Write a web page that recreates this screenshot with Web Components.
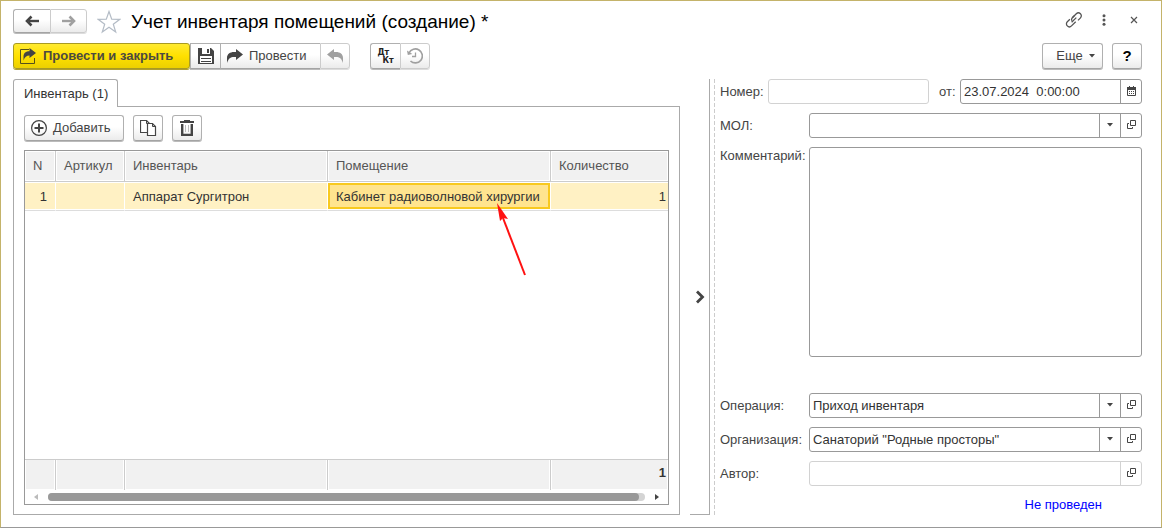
<!DOCTYPE html>
<html lang="ru">
<head>
<meta charset="utf-8">
<title>Учет инвентаря помещений (создание) *</title>
<style>
  html, body { margin: 0; }
  body {
    font: 13px/16px "Liberation Sans", Arial, sans-serif;
    color: #444;
    background: #fff;
  }
</style>
</head>
<body>
<app-window></app-window>

<script>
const ICONS = {
  back: [14, 12, '<path d="M14 6H4" stroke="currentColor" stroke-width="2.400" fill="none"/><path d="M6.500 1.500 2 6l4.500 4.500" stroke="currentColor" stroke-width="2.600" fill="none"/>'],
  forward: [14, 12, '<path d="M0 6h10" stroke="currentColor" stroke-width="2.400" fill="none"/><path d="M7.500 1.500 12 6l-4.500 4.500" stroke="currentColor" stroke-width="2.600" fill="none"/>'],
  star: [24, 24, '<path d="M12 1.500l2.700 7.700 8.100.1-6.500 4.900 2.400 7.800L12 17.300 5.300 22l2.400-7.800L1.200 9.300l8.100-.1z" fill="none" stroke="#b4bcc6" stroke-width="1.200"/>'],
  link: [18, 18, '<g fill="none" stroke="#555" stroke-width="1.300"><path d="M7.300 6.800l4-4a2.900 2.900 0 0 1 4.200 4.100L13 9.400"/><path d="M9.300 4.800L7.300 6.800c-.9 1-.9 2-.5 2.900"/><path d="M10.700 10.700l-4.200 4.200a2.900 2.900 0 0 1-4.200-4.200L4.900 8.200"/><path d="M6.600 11.300l4.700-4.700"/></g>'],
  dots: [4, 12, '<g fill="#555"><circle cx="2" cy="1.700" r="1.500"/><circle cx="2" cy="6" r="1.500"/><circle cx="2" cy="10.300" r="1.500"/></g>'],
  close: [8, 8, '<path d="M1 1l6 6M7 1L1 7" stroke="#555" stroke-width="1.200"/>'],
  post: [17, 16, '<path d="M9 1.500H.500v14h14V10" fill="none" stroke="#55501c"/><path d="M3.500 12.500V8.500C3.500 5 6 3.200 9.500 3.200V0L16 5l-6.500 5V7.600C6.500 7.600 4.700 9 3.500 12.500z" fill="#444"/>'],
  save: [16, 16, '<path d="M0 0h13l3 3v13H0z" fill="#444"/><path d="M4 0h8v6H4z" fill="#fff"/><path d="M9 1h2v4H9z" fill="#444"/><path d="M2 8h12v7H2z" fill="#fff"/><path d="M3 10.500h10M3 13.500h10" stroke="#444"/>'],
  redo: [16, 15, '<path d="M0 14V9c0-4 3-6 7-6h2V0l7 5.500L9 11V8H7C3.500 8 1.500 9.500 0 14z" fill="currentColor"/>'],
  undo: [16, 15, '<path d="M16 14V9c0-4-3-6-7-6H7V0L0 5.500 7 11V8h2c3.500 0 5.500 1.500 7 6z" fill="currentColor"/>'],
  history: [16, 16, '<path d="M2 5A7 7 0 1 1 3.500 13" fill="none" stroke="currentColor" stroke-width="1.700"/><path d="M0 2.500l.8 4.500 4.500-1z" fill="currentColor"/><path d="M8.500 4.500v4H5" fill="none" stroke="currentColor" stroke-width="1.300"/>'],
  add: [16, 16, '<circle cx="8" cy="8" r="7.400" fill="none" stroke="#444" stroke-width="1.200"/><path d="M8 3.500v9M3.500 8h9" stroke="#444" stroke-width="2"/>'],
  copy: [17, 16, '<path d="M6 12.500H.5V.5h6l3 3v9z" fill="#fff" stroke="#444" stroke-width="1.200"/><path d="M6.500.5v3h3" fill="none" stroke="#444"/><path d="M7.500 3.500h5l3 3v9h-8z" fill="#fff" stroke="#444" stroke-width="1.200"/><path d="M12.500 3.500v3h3" fill="none" stroke="#444"/>'],
  trash: [14, 16, '<path d="M0 1h4V0h6v1h4v2H0z" fill="#444"/><path d="M2.200 4v10.900h9.600V4" fill="none" stroke="#444" stroke-width="2.400"/><path d="M5.500 5v7M8.500 5v7" stroke="#bbb"/>'],
  caret: [6, 4, '<path d="M0 0h6L3 3.500z" fill="#444"/>'],
  open: [9, 9, '<path d="M3.500.5h5v5h-5z" fill="none" stroke="#444"/><path d="M2 3.500H.5v5h5V7" fill="none" stroke="#444"/>'],
  calendar: [9, 10, '<path d="M.5 1.500h8v8h-8z" fill="#fff" stroke="#444"/><path d="M0 1h9v3H0zM2 0h1v2H2zM6 0h1v2H6z" fill="#444"/><path d="M2 5.500h5M2 7.500h5" stroke="#444" stroke-dasharray="1 1"/>'],
  chevron: [10, 14, '<path d="M2 1.500L7.500 7 2 12.500" fill="none" stroke="#444" stroke-width="2.800"/>'],
  left: [4, 6, '<path d="M4 0v6L0 3z" fill="#bbb"/>'],
  right: [4, 6, '<path d="M0 0v6l4-3z" fill="#444"/>'],
  pointer: [32, 74, '<path d="M29 72L7 15" stroke="#f11" stroke-width="2" fill="none"/><path d="M1 0l11 16-5-1-3 3z" fill="#f11"/>']
};

function define(name, html, setup) {
  const template = document.createElement('template');
  template.innerHTML = html;
  customElements.define(name, class extends HTMLElement {
    connectedCallback() {
      if (this.shadowRoot) return;
      const root = this.attachShadow({ mode: 'open' });
      root.append(template.content.cloneNode(true));
      if (setup) setup(this, root);
    }
  });
}

define('ui-icon', '<style>:host{display:inline-flex;flex:none}svg{display:block}</style>', (host, root) => {
  const [w, h, body] = ICONS[host.getAttribute('name')];
  root.innerHTML += `<svg width="${w}" height="${h}" viewBox="0 0 ${w} ${h}" aria-hidden="true">${body}</svg>`;
});

define('ui-button', `
<style>
  :host { display: inline-flex; height: 27px; }
  button {
    box-sizing: border-box; min-width: 30px; height: calc(100% - 1px); width: 100%; padding: 0 4px;
    display: flex; align-items: center; justify-content: center; gap: 6px;
    font: inherit; color: #444; white-space: nowrap;
    border: 1px solid #b0b0b0; border-bottom-color: #a4a4a4; border-radius: 3px;
    box-shadow: 0 1px #bbb;
    background: linear-gradient(#fff 45%, #ebebeb);
  }
  :host([tone=nav]) { height: 25px; }
  :host([tone=nav]) button { min-width: 37px; }
  :host([wide]) button { justify-content: flex-start; padding: 0 6px; }
  :host([tone=primary]) button {
    font-weight: bold; color: #4c4a40; border-color: #a89a22; box-shadow: 0 1px #b0a030;
    background: linear-gradient(#ffea30, #ffe000 50%, #ecd000);
  }
  :host([tone=flat]) button { border: 0; background: none; box-shadow: none; }
  :host([off]) button { color: #a0a0a0; border-color: #ccc; box-shadow: 0 1px #ddd; }
  :host([join~=right]) button { border-top-right-radius: 0; border-bottom-right-radius: 0; border-right: 0; }
  :host([join~=left]) button { border-top-left-radius: 0; border-bottom-left-radius: 0; }
</style>
<button type="button"><slot></slot></button>`, (host, root) => {
  const b = root.querySelector('button');
  b.disabled = host.hasAttribute('off');
  if (host.hasAttribute('hint')) { b.setAttribute('aria-label', host.getAttribute('hint')); b.title = host.getAttribute('hint'); }
});

define('ui-field', `
<style>
  :host { display: flex; align-items: flex-start; }
  label { flex: none; width: var(--label-width, 89px); line-height: 25px; white-space: nowrap; }
  .box {
    flex: 1; min-width: 0; box-sizing: border-box; height: 25px; display: grid;
    grid-template-columns: minmax(0, 1fr) auto auto;
    border: 1px solid #999; border-radius: 3px; background: #fff;
  }
  :host([muted]) .box { border-color: #d2d2d2; }
  input, select, textarea {
    grid-area: 1 / 1; box-sizing: border-box; width: 100%; margin: 0; padding: 0 3px; border: 0;
    font: inherit; color: #333; background: none; appearance: none; outline: 0; resize: none; border-radius: 0;
  }
  select { grid-column: 1 / 3; }
  .caret, button {
    box-sizing: border-box; width: 21px; display: flex; align-items: center; justify-content: center;
    border: 0; border-left: 1px solid #999; background: none; padding: 0 0 2px;
  }
  :host([muted]) button { border-color: #d2d2d2; }
  .caret { grid-area: 1 / 2; pointer-events: none; }
  button { grid-area: 1 / 3; }
  :host([kind=memo]) { align-items: stretch; }
  :host([kind=memo]) label { line-height: 18px; }
  :host([kind=memo]) .box { height: auto; min-height: 120px; }
</style>
<label for="control"></label><div class="box"></div>`, (host, root) => {
  const kind = host.getAttribute('kind');
  const value = host.getAttribute('value') || '';
  root.querySelector('label').textContent = host.getAttribute('label');
  const control = document.createElement(kind === 'select' ? 'select' : kind === 'memo' ? 'textarea' : 'input');
  control.id = 'control';
  if (kind === 'select') control.add(new Option(value, value, true, true));
  else control.value = value;
  if (host.hasAttribute('muted')) control.readOnly = true;
  const box = root.querySelector('.box');
  box.append(control);
  if (kind === 'select') box.insertAdjacentHTML('beforeend', '<span class="caret"><ui-icon name="caret"></ui-icon></span>');
  const action = host.getAttribute('action');
  if (action) box.insertAdjacentHTML('beforeend',
    `<button type="button" aria-label="${action === 'open' ? 'Открыть' : 'Выбрать дату'}"><ui-icon name="${action}"></ui-icon></button>`);
});

define('window-header', `
<style>
  :host { display: flex; align-items: center; height: 25px; }
  .nav { display: flex; }
  ui-icon[name=star] { margin: 0 10px; }
  h1 { flex: 1; min-width: 0; margin: 0; font-size: 19px; line-height: 24px; font-weight: normal; color: #000; white-space: nowrap; }
  .tools { display: flex; margin-right: -7px; padding-bottom: 2px; }
</style>
<div class="nav">
  <ui-button tone="nav" join="right" hint="Назад"><ui-icon name="back"></ui-icon></ui-button>
  <ui-button tone="nav" join="left" off hint="Вперед"><ui-icon name="forward"></ui-icon></ui-button>
</div>
<ui-icon name="star"></ui-icon>
<h1><slot></slot></h1>
<div class="tools">
  <ui-button tone="flat" hint="Получить ссылку"><ui-icon name="link"></ui-icon></ui-button>
  <ui-button tone="flat" hint="Меню"><ui-icon name="dots"></ui-icon></ui-button>
  <ui-button tone="flat" hint="Закрыть"><ui-icon name="close"></ui-icon></ui-button>
</div>`);

define('command-bar', `
<style>
  :host { display: flex; justify-content: space-between; gap: 20px; }
  .side, .group { display: flex; }
  .start { gap: 20px; }
  .end { gap: 9px; }
  .main { width: 177px; }
  .post { width: 100px; }
  .more { width: 61px; }
  .more span { padding-left: 6px; }
  .dk { display: grid; font: bold 8px/8px "DejaVu Sans", sans-serif; text-align: left; color: #222; padding-top: 2px; }
  .dk span:last-child { padding-left: 5px; }
  .help { font-weight: bold; font-size: 15px; }
  .help span { color: #000; }
</style>
<div class="side start">
  <div class="group">
    <ui-button class="main" tone="primary" wide><ui-icon name="post"></ui-icon>Провести и закрыть</ui-button>
    <ui-button join="left right" hint="Записать"><ui-icon name="save"></ui-icon></ui-button>
    <ui-button class="post" join="left right" wide><ui-icon name="redo"></ui-icon>Провести</ui-button>
    <ui-button join="left" off hint="Отмена проведения"><ui-icon name="undo"></ui-icon></ui-button>
  </div>
  <div class="group">
    <ui-button join="right" hint="Проводки"><span class="dk"><span>Дт</span><span>Кт</span></span></ui-button>
    <ui-button join="left" off hint="История"><ui-icon name="history"></ui-icon></ui-button>
  </div>
</div>
<div class="side end">
  <ui-button class="more"><span>Еще</span><ui-icon name="caret"></ui-icon></ui-button>
  <ui-button class="help"><span>?</span></ui-button>
</div>`);

define('tab-panel', `
<style>
  :host { display: flex; flex-direction: column; min-width: 0; }
  .tabs { display: flex; }
  .tab {
    box-sizing: border-box; height: 28px; padding: 0 9px 0 10px; margin-bottom: -1px;
    font: inherit; color: #333; background: #fff; position: relative;
    border: 1px solid #aaa; border-bottom: 0; border-radius: 3px 3px 0 0;
  }
  .body {
    flex: 1; display: flex; flex-direction: column; gap: 8px; min-width: 0;
    border: 1px solid #aaa; padding: 8px 10px 9px;
  }
</style>
<div class="tabs" role="tablist"><button class="tab" role="tab" type="button" aria-selected="true"></button></div>
<div class="body" role="tabpanel"><slot></slot></div>`, (host, root) => {
  root.querySelector('.tab').textContent = host.getAttribute('label');
});

define('inventory-table', `
<style>
  :host { flex: 1; display: flex; flex-direction: column; min-width: 0; border: 1px solid #999; }
  .view { flex: 1; display: grid; }
  table { width: 100%; height: 100%; table-layout: fixed; border-collapse: separate; border-spacing: 0; }
  th, td { box-sizing: border-box; padding: 0 8px; text-align: left; font-weight: normal; white-space: nowrap; }
  thead th, tfoot td {
    height: 31px; background: #f1f1f1; color: #555;
    box-shadow: inset 1px 1px #fff, inset -1px -1px #fff; border-right: 1px solid #ccc;
  }
  thead th { border-bottom: 1px solid #ccc; }
  tfoot td { border-top: 1px solid #ccc; padding-bottom: 4px; font-weight: bold; color: #333; box-shadow: inset 1px 0 #fff, inset -1px -1px #fff; }
  .row td {
    height: 29px; padding-top: 2px; color: #333; background: #fff1c4; border-right: 1px solid #fff;
    border-bottom: 1px solid #ddd; box-shadow: inset 0 1px #fff, inset 0 -1px #fff;
  }
  tr > :last-child { border-right: 0; }
  tr > td.num { text-align: right; }
  tr > td.num:last-child { padding-right: 2px; }
  .row td.current { position: relative; padding: 0; box-shadow: none; background: #fff; }
  .current div { margin: 1px 0; height: 26px; box-sizing: border-box; border: 2px solid #f8c91f; background: #ffe48f; padding: 0 6px; line-height: 23px; }
  .current ui-icon { position: absolute; left: 168px; top: 21px; z-index: 1; pointer-events: none; }
  .scroll { height: 14px; display: flex; align-items: center; gap: 10px; padding: 0 9px; }
  .track { flex: 1; height: 8px; border-radius: 4px; background: #d4d4d4; }
  .thumb { width: 99%; height: 8px; border-radius: 4px; background: #999; }
</style>
<div class="view">
<table>
  <colgroup><col style="width:31px"><col style="width:69px"><col style="width:203px"><col style="width:223px"><col></colgroup>
  <thead><tr><th>N</th><th>Артикул</th><th>Инвентарь</th><th>Помещение</th><th>Количество</th></tr></thead>
  <tbody>
    <tr class="row"><td class="num">1</td><td></td><td>Аппарат Сургитрон</td>
      <td class="current"><div>Кабинет радиоволновой хирургии</div><ui-icon name="pointer"></ui-icon></td><td class="num">1</td></tr>
    <tr><td colspan="5"></td></tr>
  </tbody>
  <tfoot><tr><td></td><td></td><td></td><td></td><td class="num">1</td></tr></tfoot>
</table>
</div>
<div class="scroll"><ui-icon name="left"></ui-icon><div class="track"><div class="thumb"></div></div><ui-icon name="right"></ui-icon></div>`);

define('inventory-list', `
<style>
  :host { display: contents; }
  .bar { display: flex; gap: 9px; }
  .add { width: 100px; }
</style>
<div class="bar">
  <ui-button class="add" wide><ui-icon name="add"></ui-icon>Добавить</ui-button>
  <ui-button hint="Скопировать"><ui-icon name="copy"></ui-icon></ui-button>
  <ui-button hint="Удалить"><ui-icon name="trash"></ui-icon></ui-button>
</div>
<inventory-table></inventory-table>`);

define('side-splitter', `
<style>
  :host { display: flex; border-right: 1px solid #aaa; border-bottom: 1px solid #aaa; }
  button { flex: 1; display: flex; align-items: center; justify-content: center; border: 0; padding: 0; background: none; }
</style>
<button type="button" aria-label="Свернуть панель"><ui-icon name="chevron"></ui-icon></button>`);

define('document-form', `
<style>
  :host {
    display: flex; flex-direction: column; gap: 9px; min-width: 0; padding-left: 6px;
    background: repeating-linear-gradient(#ccc 0 4px, #fff 4px 6px) left / 1px 100% no-repeat;
  }
  .pair { display: grid; grid-template-columns: minmax(0, 209fr) minmax(0, 203fr); gap: 10px; }
  .number { --label-width: 48px; }
  .date { --label-width: 21px; }
  .memo { flex: 1; margin-bottom: 27px; }
  a { align-self: flex-end; margin-right: 40px; line-height: 20px; color: #00f; text-decoration: none; }
</style>
<div class="pair">
  <ui-field class="number" label="Номер:" muted></ui-field>
  <ui-field class="date" label="от:" value="23.07.2024  0:00:00" action="calendar"></ui-field>
</div>
<ui-field label="МОЛ:" kind="select" action="open"></ui-field>
<ui-field class="memo" label="Комментарий:" kind="memo"></ui-field>
<ui-field label="Операция:" kind="select" value="Приход инвентаря" action="open"></ui-field>
<ui-field label="Организация:" kind="select" value='Санаторий "Родные просторы"' action="open"></ui-field>
<ui-field label="Автор:" muted action="open"></ui-field>
<a href="#status">Не проведен</a>`);

define('app-window', `
<style>
  :host {
    box-sizing: border-box; min-height: 100vh; display: flex; flex-direction: column; gap: 9px;
    padding: 8px 19px 12px 12px; border: 1px solid #c4b36a; border-bottom-color: #999;
  }
  main { flex: 1; display: grid; grid-template-columns: minmax(0, 667fr) 34px minmax(0, 428fr); }
  side-splitter { margin: 0 4px 0 10px; }
</style>
<window-header>Учет инвентаря помещений (создание) *</window-header>
<command-bar></command-bar>
<main>
  <tab-panel label="Инвентарь (1)"><inventory-list></inventory-list></tab-panel>
  <side-splitter></side-splitter>
  <document-form></document-form>
</main>`);
</script>
</body>
</html>
